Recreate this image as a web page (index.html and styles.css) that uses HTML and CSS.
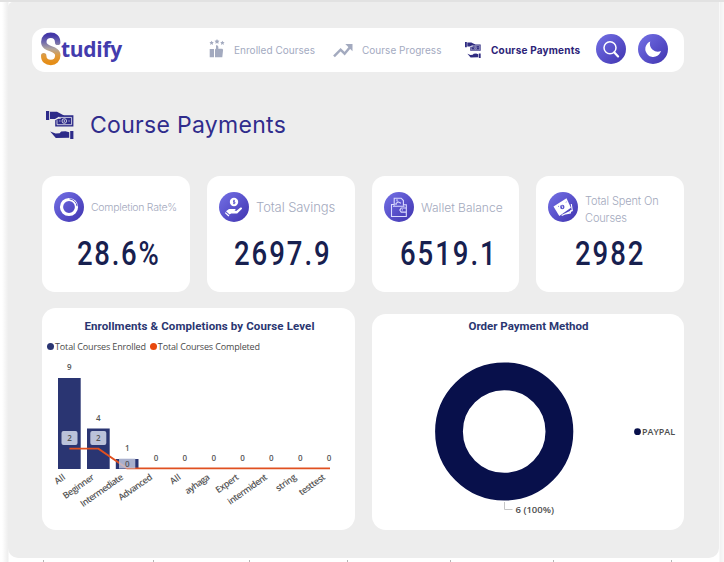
FILE: index.html
```html
<!DOCTYPE html>
<html lang="en">
<head>
<meta charset="utf-8">
<title>Studify - Course Payments</title>
<link rel="stylesheet" href="styles.css">
</head>
<body>
<svg class="defs" width="0" height="0" aria-hidden="true">
  <defs>
    <linearGradient id="logo" x1="0" y1="0" x2="0" y2="1"><stop offset="0" stop-color="#4438a8"/><stop offset=".26" stop-color="#716bac"/><stop offset=".5" stop-color="#b1a69f"/><stop offset=".75" stop-color="#e09a3b"/><stop offset="1" stop-color="#e58e18"/></linearGradient>
    <symbol id="pay" viewBox="0 0 28 28">
      <path d="M0 0h3.2v9H0zM4 .8h7l7 3.6-1 2.1-4.2-.7L9 8H4z"/>
      <path d="M10 4.2h17.4v11.3H9.2V9.2l3.2-1.4h3z"/>
      <g fill="none" stroke="#ededf3" stroke-width=".8"><path d="M12 6.4h13.6v7.3H11V9.2"/><circle cx="18.3" cy="10" r="2.3"/><path d="M13.3 10h1.1M22.5 10h1.1M18.3 8.8v2.4"/></g>
      <path d="M24.2 20h3.2v8h-3.2zM4.2 20.6l5.4 2 4-.4 1.6-1.7 4.3-.2 3.7 1v5.4l-13.4.4z"/>
    </symbol>
  </defs>
</svg>
<div class="frame">
<main class="board">
  <header class="nav">
    <div class="logo" aria-label="Studify">
      <svg width="20" height="34" viewBox="0 0 20 34"><path d="M16.700 10.400C16.700 5.300 13.600 3.300 9.800 3.300 5.700 3.300 2.800 5.800 2.800 10 2.800 18.300 16.800 15.300 16.800 23.300 16.800 28 13.800 30.500 9.800 30.500 5.600 30.500 2.700 28.200 2.700 23.700" fill="none" stroke="url(#logo)" stroke-width="5.400" stroke-linecap="round"/></svg>
      <span class="logo-text">tudify</span>
    </div>
    <a class="link enrolled"><svg width="16" height="19" viewBox="0 0 16 19" fill="#a3aabf"><path d="M8 0l.8 1.500 1.700.3-1.200 1.200.3 1.800L8 4l-1.600.8.3-1.800-1.200-1.200 1.700-.3zM2.600 1.800l.7 1.300 1.500.2-1.100 1 .3 1.600-1.400-.8-1.400.8.3-1.600-1.100-1 1.500-.2zM13.400 1.800l.7 1.300 1.500.2-1.100 1 .3 1.600-1.400-.8-1.400.8.3-1.600-1.100-1 1.500-.2zM.7 10H5v8.300H.7zM6 10.500l1-1V6.300c1.800-.4 2.800.8 2.300 3.500h4l.8 1-.8 7.500H6z"/></svg><span>Enrolled Courses</span></a>
    <a class="link progress"><svg width="20" height="15" viewBox="0 0 20 15"><path d="M1 13.300l6.600-6.600 4 4L18 3" fill="none" stroke="#a3aabf" stroke-width="2.500"/><path d="M12.300 1h7.200v7.200z" fill="#a3aabf"/></svg><span>Course Progress</span></a>
    <a class="link active"><svg width="16" height="16"><use href="#pay"/></svg><span>Course Payments</span></a>
    <button class="round search" aria-label="Search"><svg width="30" height="30" viewBox="0 0 30 30" fill="none" stroke="#fff"><circle cx="14" cy="13.800" r="6" stroke-width="1.500"/><path d="M18.400 18.400l3.700 4" stroke-width="2.200" stroke-linecap="round"/></svg></button>
    <button class="round night" aria-label="Dark mode"><svg width="30" height="30" viewBox="0 0 30 30"><path d="M12.200 7.500A8 8 0 1 0 23 17 8 8 0 0 1 12.200 7.500z" fill="#fff"/></svg></button>
  </header>

  <div class="heading"><svg width="28" height="28"><use href="#pay"/></svg><h1>Course Payments</h1></div>

  <section class="stats">
    <article class="card">
      <div class="card-head"><i class="round"><svg width="30" height="30" viewBox="0 0 30 30" fill="none"><circle cx="15" cy="15" r="7.500" stroke="#fff" stroke-width="3.200"/><path d="M15.500 6.900a8.200 8.200 0 0 1 7.500 7.300" stroke="#6660cc" stroke-width="1"/></svg></i><span class="label small">Completion Rate%</span></div>
      <div class="value v1">28.6%</div>
    </article>
    <article class="card">
      <div class="card-head"><i class="round"><svg width="30" height="30" viewBox="0 0 30 30" fill="#fff"><circle cx="15" cy="10" r="4.200"/><path d="M15 7.700v4.600M16 8.700h-1.500v1.300H16v1.300h-2" stroke="#5b54cb" stroke-width=".8" fill="none"/><path d="M7 19.300l3-2.400 6 .2c1.200.7.8 1.800-.7 1.800h-2.200 4.100l4.300-3.300c1.300-.5 2 .4 1.300 1.500l-4.600 4.300h-6l-1.600 1.200zM6.600 20.200l3.800 3.300-1 .9-3.600-3.400z"/></svg></i><span class="label large">Total Savings</span></div>
      <div class="value v2">2697.9</div>
    </article>
    <article class="card">
      <div class="card-head"><i class="round"><svg width="30" height="30" viewBox="0 0 30 30" fill="none" stroke="#dcdcff" stroke-width="1.100"><path d="M10 12.500H7.500v12h14.800V12.800h-3"/><path d="M10.200 13.500V6.200h7l2.200 2.300v5M12 13v-1.500l2-1.700 3 1.500M13 7.200v2M22.300 16h-5.100l-1.400 2.100 1.400 2h5.100M17.800 17.900h1M9 14.200h11.500"/></svg></i><span class="label wallet">Wallet Balance</span></div>
      <div class="value v3">6519.1</div>
    </article>
    <article class="card">
      <div class="card-head"><i class="round"><svg width="30" height="30" viewBox="0 0 30 30" fill="#fff"><path d="M5.500 14.500l13-8.200 4.400 9.400-11.600 8.300z"/><circle cx="14.300" cy="15" r="2.200" fill="#5a54cc"/><path d="M14 13.500l.7 2.700" stroke="#fff" stroke-width=".8"/><path d="M23.300 12l1 6.600-10.600 4.900M22.900 18l-.6 3-4.800 1" fill="none" stroke="#fff" stroke-width="1.100"/><path d="M10 14.700l.8-.5M17.800 10.300l.7-.4" stroke="#6963cf" stroke-width="1"/></svg></i><span class="label wrap">Total Spent On Courses</span></div>
      <div class="value v4">2982</div>
    </article>
  </section>

  <section class="charts">
    <article class="chart levels">
      <h2>Enrollments &amp; Completions by Course Level</h2>
      <div class="legend"><i class="dot navy"></i><span>Total Courses Enrolled</span><i class="dot orange"></i><span>Total Courses Completed</span></div>
      <svg class="plot" width="313" height="170" viewBox="42 356 313 170">
        <g fill="#2a3572"><path d="M58 378h22.700v91H58zM87 428.500h22.700V469H87zM115.800 459h22.700v10h-22.700z"/></g>
        <path d="M69.400 448.600h29L127 468.400h203" fill="none" stroke="#e05020" stroke-width="1.900"/>
        <g fill="#c5cbe0" fill-opacity=".94"><rect x="61.500" y="431" width="16" height="14" rx="2"/><rect x="90.300" y="431" width="16" height="14" rx="2"/><path d="M119 458.500h16.300v10H119z" fill-opacity=".82"/></g>
        <g class="num" text-anchor="middle">
          <text x="69.400" y="370">9</text><text x="98.200" y="421">4</text><text x="127.200" y="451">1</text>
          <text x="69.500" y="441">2</text><text x="98.300" y="441">2</text><text x="127.200" y="467">0</text>
          <text x="156" y="461">0</text><text x="184.800" y="461">0</text><text x="213.700" y="461">0</text><text x="242.600" y="461">0</text><text x="271.400" y="461">0</text><text x="300.300" y="461">0</text><text x="329" y="461">0</text>
        </g>
        <g class="axis" text-anchor="end">
          <text transform="translate(66 478.500) rotate(-35)">All</text>
          <text transform="translate(95 478.500) rotate(-35)" textLength="36">Beginner</text>
          <text transform="translate(124 478.500) rotate(-35)" textLength="50">Intermediate</text>
          <text transform="translate(153 478.500) rotate(-35)" textLength="39">Advanced</text>
          <text transform="translate(181.500 478.500) rotate(-35)">All</text>
          <text transform="translate(210.500 478.500) rotate(-35)" textLength="28">ayhaga</text>
          <text transform="translate(239.500 478.500) rotate(-35)" textLength="26">Expert</text>
          <text transform="translate(268 478.500) rotate(-35)" textLength="46">intermident</text>
          <text transform="translate(297 478.500) rotate(-35)" textLength="23">string</text>
          <text transform="translate(326 478.500) rotate(-35)" textLength="30">testtest</text>
        </g>
      </svg>
    </article>
    <article class="chart payment">
      <h2>Order Payment Method</h2>
      <svg class="plot" width="312" height="180" viewBox="372 346 312 180">
        <circle cx="504.200" cy="431.500" r="55.200" fill="none" stroke="#08104b" stroke-width="27.800"/>
        <path d="M504.500 502v7.500h8" fill="none" stroke="#c6c6c6"/>
        <text class="slice" x="515.500" y="513" textLength="38.500" lengthAdjust="spacingAndGlyphs">6 (100%)</text>
        <circle cx="637.500" cy="431.700" r="3.400" fill="#08104b"/>
        <text class="slice" x="642" y="435" textLength="33" lengthAdjust="spacingAndGlyphs">PAYPAL</text>
      </svg>
    </article>
  </section>
</main>
<svg class="ticks" width="724" height="4" viewBox="0 0 724 4"><path d="M43.500 2v2M153.500 2v2M249.500 2v2M347.500 2v2M450.500 2v2M553.500 2v2M671.500 2v2" stroke="#b5b5b5"/></svg>
</div>
</body>
</html>
```
FILE: styles.css
```css
* { box-sizing: border-box; }
body { margin: 0; background: #fff; font-family: Inter, "Liberation Sans", sans-serif; overflow: hidden; }
svg { display: block; flex: none; }
.defs { position: absolute; }
.frame { width: 724px; height: 562px; padding-top: 2px; display: flex; flex-direction: column; background: linear-gradient(#e2e2e2 0 2px, transparent 2px), linear-gradient(90deg, #fff 0 2px, #eeeeee 8px, #fff 9px, #fff 719px, #f1f1f1 720px, #f9f9f9 724px); }
.board { width: 711px; height: 556px; margin-left: 8px; padding: 26px 35px 28px 34px; background: #ededed; border-radius: 5px 0 10px 10px; }
.nav { display: flex; align-items: center; width: 652px; height: 44px; margin-left: -10px; background: #fff; border-radius: 13px; }
.logo { display: flex; align-items: center; width: 168px; padding: 0 0 2px 9px; }
.logo-text { font: 700 21px "Open Sans", sans-serif; line-height: 30px; color: #433bad; letter-spacing: -.3px; }
.link { display: flex; align-items: center; font-size: 10px; color: #a3aabf; white-space: nowrap; letter-spacing: .03px; }
.link span { margin-top: -1px; }
.enrolled { width: 125px; padding-left: 9px; gap: 9px; }
.enrolled svg { margin-top: -4px; }
.progress { width: 131px; padding-left: 8px; gap: 9px; }
.active { width: 132px; margin-left: 9px; gap: 10px; color: #2c2378; font-weight: 700; fill: #302c82; letter-spacing: .2px; }
.round { display: block; flex: none; width: 30px; height: 30px; padding: 0; border: 0; border-radius: 50%; background: linear-gradient(135deg, #7471e5, #5951cb 52%, #4034ae); }
.nav .round { margin-bottom: 2px; }
.search { margin-left: -1px; }
.night { margin-left: 12px; }
.heading { display: flex; align-items: center; height: 30px; margin: 38px 0 36px 4px; fill: #2d2b89; }
.heading svg { margin-right: 16px; }
h1 { margin: 0; font-size: 23px; line-height: 30px; font-weight: 400; color: #302c8c; letter-spacing: .3px; white-space: nowrap; }
.stats { display: grid; grid-template-columns: 148px 148px 147px 148px; gap: 17px; width: 642px; }
.card { height: 116px; padding: 14px 8px 0 12px; background: #fff; border-radius: 13px; }
.card-head { display: flex; align-items: center; height: 34px; }
.label { margin-left: 7px; color: #a3a9bd; font-weight: 300; white-space: nowrap; }
.small { font-size: 10.500px; letter-spacing: -.27px; }
.large { font-size: 13px; letter-spacing: -.1px; }
.wallet { font-size: 12px; }
.label.wrap { width: 82px; margin-top: 6px; font-size: 11px; line-height: 17px; letter-spacing: -.13px; white-space: normal; }
.value { width: max-content; margin-top: 10px; font: 500 34px Roboto, sans-serif; line-height: 39px; letter-spacing: 2.400px; color: #17204f; transform: scaleX(.81); transform-origin: left; }
.v1 { margin-left: 23px; letter-spacing: 2.100px; }
.v2 { margin-left: 15px; }
.v3 { margin-left: 16px; }
.v4 { margin-left: 27px; }
.charts { display: flex; align-items: flex-end; gap: 17px; width: 642px; margin-top: 16px; }
.chart { background: #fff; border-radius: 14px; overflow: hidden; }
.levels { width: 313px; height: 222px; padding-top: 11px; }
.payment { width: 312px; height: 216px; padding-top: 5px; }
h2 { margin: 0; height: 15px; text-align: center; font: 700 11.500px Roboto, sans-serif; line-height: 15px; color: #2a3671; white-space: nowrap; }
.levels h2 { padding-left: 2px; letter-spacing: .11px; }
.payment h2 { padding-left: 1px; }
.legend { display: flex; align-items: center; height: 13px; margin-top: 6px; padding-left: 5px; font: 9px "Open Sans", sans-serif; color: #4a4a4a; white-space: nowrap; letter-spacing: -.15px; }
.dot { width: 7px; height: 7px; margin-right: 1px; border-radius: 50%; }
.navy { background: #2a3572; }
.orange { margin-left: 4px; background: #e8480c; }
.levels .plot { margin-top: 3px; }
.payment .plot { margin-top: 12px; }
.num { font: 600 8px "Open Sans", sans-serif; fill: #555; }
.axis { font: 600 9px "Open Sans", sans-serif; fill: #555; }
.slice { font: 600 9.500px "Open Sans", sans-serif; fill: #4d4d4d; }
```
